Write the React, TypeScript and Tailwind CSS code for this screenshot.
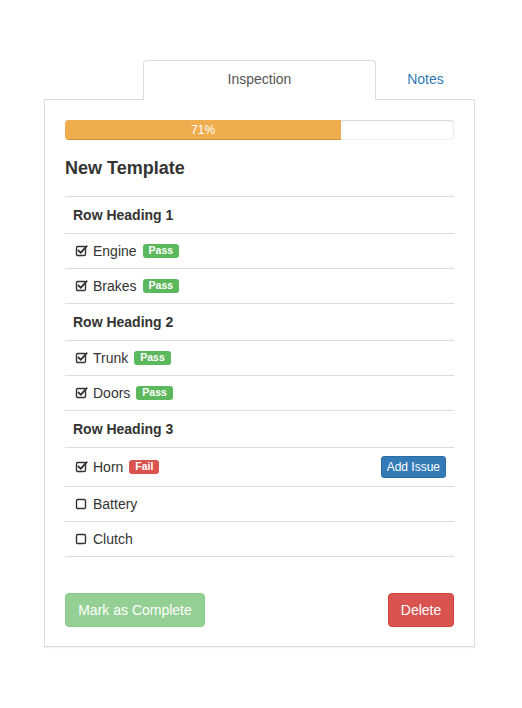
import React from "react";

function CheckIcon() {
  return (
    <svg width="13" height="13" viewBox="0 0 13 13" className="block">
      <rect x="1.5" y="2.5" width="9" height="9" rx="1.2" fill="none" stroke="#333" strokeWidth="1.4" />
      <path d="M3.6 6.6 L5.8 8.7 L11.6 2.2" fill="none" stroke="#333" strokeWidth="1.8" strokeLinecap="square" />
    </svg>
  );
}

function BoxIcon() {
  return (
    <svg width="13" height="13" viewBox="0 0 13 13" className="block">
      <rect x="1.5" y="2.5" width="9" height="9" rx="1.2" fill="none" stroke="#333" strokeWidth="1.4" />
    </svg>
  );
}

type Item = { name: string; checked: boolean; status?: "Pass" | "Fail"; issue?: boolean };
type Section = { heading: string; items: Item[] };

const sections: Section[] = [
  {
    heading: "Row Heading 1",
    items: [
      { name: "Engine", checked: true, status: "Pass" },
      { name: "Brakes", checked: true, status: "Pass" },
    ],
  },
  {
    heading: "Row Heading 2",
    items: [
      { name: "Trunk", checked: true, status: "Pass" },
      { name: "Doors", checked: true, status: "Pass" },
    ],
  },
  {
    heading: "Row Heading 3",
    items: [
      { name: "Horn", checked: true, status: "Fail", issue: true },
      { name: "Battery", checked: false },
      { name: "Clutch", checked: false },
    ],
  },
];

export default function App() {
  return (
    <div
      className="min-h-[708px] bg-white pl-[44px] pt-[60px] text-[14px] text-[#333]"
      style={{ fontFamily: '"Liberation Sans", Arial, sans-serif' }}
    >
      <div className="w-[431px]">
        <div className="flex h-[39px] justify-end">
          <div className="relative z-10 flex h-[40px] w-[233px] items-center justify-center rounded-t-[4px] border border-b-0 border-[#ddd] bg-white pb-[2px] text-[#555]">
            Inspection
          </div>
          <div className="flex h-[39px] w-[99px] items-center justify-center pb-[1px] text-[#337ab7]">Notes</div>
        </div>
        <div className="border border-[#ddd] bg-white px-[20px] pb-[19px] pt-[20px] shadow-[0_1px_1px_rgba(0,0,0,0.05)]">
          <div className="h-[20px] overflow-hidden rounded-[4px] bg-white shadow-[inset_0_1px_2px_rgba(0,0,0,0.12),inset_0_0_0_1px_rgba(0,0,0,0.06)]">
            <div className="flex h-[20px] w-[71%] items-center justify-center bg-[#f0ad4e] text-[12px] leading-[20px] text-white shadow-[inset_0_-1px_0_rgba(0,0,0,0.15)]">
              71%
            </div>
          </div>
          <h4 className="my-[18px] h-[20px] text-[18px] font-bold leading-[20px]">New Template</h4>
          <div>
            {sections.map((s) => (
              <React.Fragment key={s.heading}>
                <div className="flex h-[37px] items-center border-t border-[#ddd] px-[8px] font-bold">{s.heading}</div>
                {s.items.map((it) => (
                  <div
                    key={it.name}
                    className={`flex items-center border-t border-[#ddd] pl-[10px] pr-[8px] ${it.issue ? "h-[39px]" : "h-[35px]"}`}
                  >
                    <span className="mr-[5px] mt-[-1px]">{it.checked ? <CheckIcon /> : <BoxIcon />}</span>
                    <span>{it.name}</span>
                    {it.status && (
                      <span
                        className={`ml-[6px] rounded-[3px] px-[6px] pb-[2px] pt-[1px] text-[10.5px] font-bold leading-[11px] text-white ${
                          it.status === "Pass" ? "bg-[#5cb85c]" : "bg-[#d9534f]"
                        }`}
                      >
                        {it.status}
                      </span>
                    )}
                    {it.issue && (
                      <button className="ml-auto h-[22px] rounded-[3px] border border-[#2e6da4] bg-[#337ab7] px-[5px] text-[12px] leading-[18px] text-white">
                        Add Issue
                      </button>
                    )}
                  </div>
                ))}
              </React.Fragment>
            ))}
            <div className="border-t border-[#ddd]" />
          </div>
          <div className="mt-[36px] flex items-center justify-between">
            <button className="h-[34px] w-[140px] rounded-[4px] border border-[#4cae4c] bg-[#5cb85c] text-[14px] text-white opacity-65">
              Mark as Complete
            </button>
            <button className="h-[34px] w-[66px] rounded-[4px] border border-[#d43f3a] bg-[#d9534f] text-[14px] text-white">
              Delete
            </button>
          </div>
        </div>
      </div>
    </div>
  );
}
